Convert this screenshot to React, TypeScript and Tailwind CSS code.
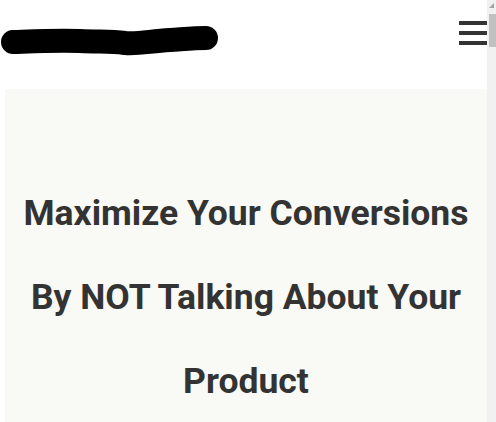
import React from "react";

function Scribble() {
  return (
    <svg width="220" height="60" viewBox="0 0 220 60" className="block">
      <path
        d="M13 44 C40 43 60 42 80 43 C100 44 110 43 125 45 C140 46 150 43 170 42 C185 41 195 40 206 40"
        fill="none"
        stroke="#000"
        strokeWidth="24"
        strokeLinecap="round"
      />
    </svg>
  );
}

function Scrollbar() {
  return (
    <div className="w-[9px] h-[422px] bg-[#f1f1f1] flex flex-col items-end shrink-0">
      <svg width="9" height="12" viewBox="0 0 9 12" className="block">
        <path d="M2 8 L7 8 L7 3 Z" fill="#a3a3a3" />
      </svg>
      <div className="w-[7px] h-[33px] bg-[#c1c1c1] mt-[2px]" />
    </div>
  );
}

export default function App() {
  return (
    <div className="flex bg-white font-['Roboto',sans-serif] h-[422px] overflow-hidden">
      <div className="flex-1 min-w-0">
        {/* Header */}
        <header className="flex items-start justify-between h-[89px]">
          <div className="mt-[-2px]">
            <Scribble />
          </div>
          <button className="mt-[21px] flex flex-col gap-[6px]" aria-label="menu">
            <span className="block w-[28px] h-[4px] bg-[#333]" />
            <span className="block w-[28px] h-[4px] bg-[#333]" />
            <span className="block w-[28px] h-[4px] bg-[#333]" />
          </button>
        </header>

        {/* Hero */}
        <section className="ml-[5px] bg-[#f9faf5] pt-[82px] pb-[200px]">
          <h1 className="text-center text-[35.5px] leading-[84px] font-bold text-[#333]">
            Maximize Your Conversions By NOT Talking About Your Product
          </h1>
        </section>
      </div>
      <Scrollbar />
    </div>
  );
}
